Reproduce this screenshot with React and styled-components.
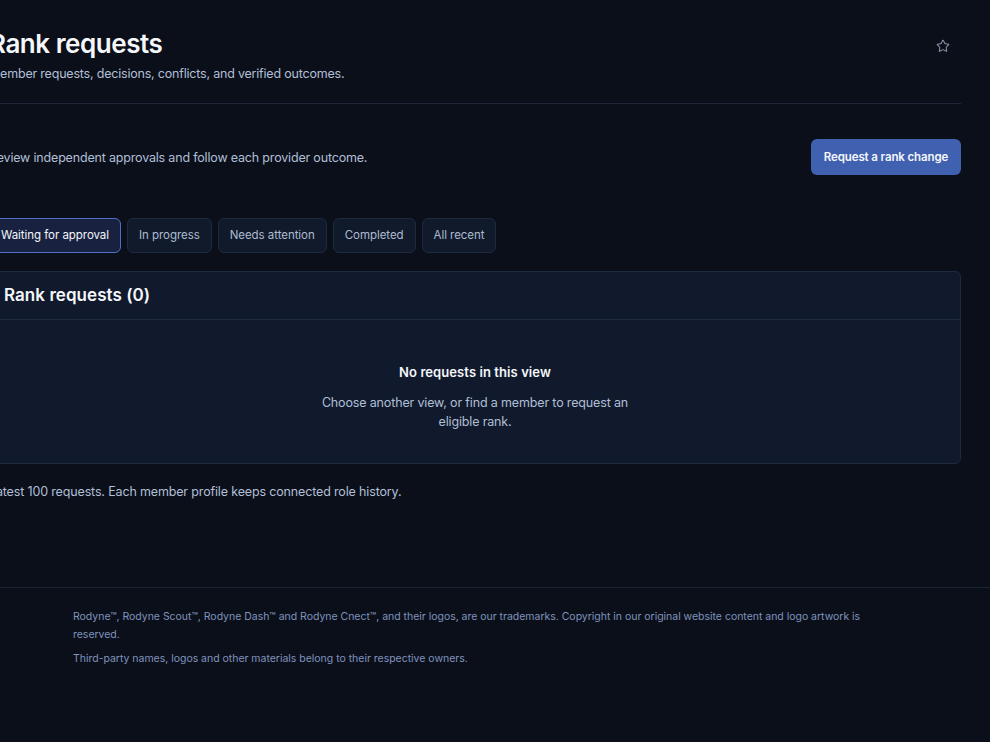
import styled, { createGlobalStyle } from 'styled-components';
import { Star } from 'lucide-react';

const GlobalStyle = createGlobalStyle`
  html, body {
    margin: 0;
    height: 100%;
    overflow: hidden;
    background: #0b0f1a;
  }
  body {
    font-family: "Inter", "Liberation Sans", sans-serif;
    color: #b1bfd6;
  }
`;

/* the page is scrolled sideways in the shot, so its left edge is off screen */
const Page = styled.div`
  width: 1030px;
  margin-left: -40px;
`;

const Main = styled.main`
  height: 587px;
  box-sizing: border-box;
  padding: 27px 29px 0;
`;

const PageHeader = styled.header`
  display: flex;
  justify-content: space-between;
  align-items: flex-start;
  height: 76px;
  border-bottom: 1px solid #1e2638;
`;

const Title = styled.h1`
  margin: 0;
  font-size: 26px;
  line-height: 34px;
  font-weight: 600;
  letter-spacing: -0.45px;
  color: #f5f7fb;
`;

const Subtitle = styled.p`
  margin: 3px 0 0;
  font-size: 12.5px;
  line-height: 20px;
  letter-spacing: -0.2px;
`;

const FavButton = styled.button`
  display: flex;
  margin: 12px 11px 0 0;
  padding: 0;
  border: none;
  background: none;
  color: #8a94a8;
`;

const ActionRow = styled.div`
  display: flex;
  justify-content: space-between;
  align-items: center;
  margin-top: 35px;
`;

const Lead = styled.p`
  margin: 0;
  font-size: 12.5px;
  letter-spacing: -0.18px;
`;

const PrimaryButton = styled.button`
  height: 36px;
  width: 150px;
  border: none;
  border-radius: 6px;
  background: #4060b0;
  color: #f5f7fb;
  font: 600 11.5px "Inter", sans-serif;
  letter-spacing: -0.12px;
`;

const Tabs = styled.div`
  display: flex;
  gap: 6px;
  margin-top: 43px;
`;

const Tab = styled.button`
  height: 35px;
  box-sizing: border-box;
  padding: 0 11px 1px;
  border: 1px solid ${props => (props.$active ? '#4f6fc9' : '#1e2a3e')};
  border-radius: 6px;
  background: ${props => (props.$active ? '#182240' : '#111a2b')};
  color: ${props => (props.$active ? '#f5f7fb' : '#aebbd0')};
  font: 400 11.5px "Inter", sans-serif;
  letter-spacing: -0.05px;
`;

const Panel = styled.section`
  margin-top: 18px;
  height: 193px;
  box-sizing: border-box;
  border: 1px solid #1e2a3e;
  border-radius: 6px;
  background: #101a2c;
`;

const PanelHeader = styled.div`
  height: 48px;
  box-sizing: border-box;
  padding: 0 14px 2px;
  display: flex;
  align-items: center;
  border-bottom: 1px solid #1e2a3e;
`;

const PanelTitle = styled.h2`
  margin: 0;
  font-size: 17px;
  font-weight: 600;
  letter-spacing: 0.05px;
  color: #f5f7fb;
`;

const Empty = styled.div`
  width: 320px;
  margin: 42px auto 0;
  text-align: center;
`;

const EmptyTitle = styled.h3`
  margin: 0;
  font-size: 13px;
  line-height: 20px;
  font-weight: 600;
  letter-spacing: 0.08px;
  color: #f5f7fb;
`;

const EmptyText = styled.p`
  margin: 11px 0 0;
  font-size: 12.5px;
  line-height: 19px;
  letter-spacing: -0.15px;
`;

const Note = styled.p`
  margin: 18px 0 0;
  font-size: 12.5px;
  line-height: 20px;
  letter-spacing: -0.15px;
`;

const Footer = styled.footer`
  height: 155px;
  box-sizing: border-box;
  border-top: 1px solid #1a2233;
  padding: 20px 0 0 113px;
`;

const Legal = styled.p`
  width: 800px;
  margin: 0 0 6px;
  font-size: 10.5px;
  line-height: 18px;
  letter-spacing: -0.02px;
  color: #7f93bd;
`;

export default function App() {
  const tabs = ['Waiting for approval', 'In progress', 'Needs attention', 'Completed', 'All recent'];

  return (
    <Page>
      <GlobalStyle />
      <Main>
        <PageHeader>
          <div>
            <Title>Rank requests</Title>
            <Subtitle>Member requests, decisions, conflicts, and verified outcomes.</Subtitle>
          </div>
          <FavButton aria-label="Add to favourites">
            <Star size={14} strokeWidth={1.75} />
          </FavButton>
        </PageHeader>

        <ActionRow>
          <Lead>Review independent approvals and follow each provider outcome.</Lead>
          <PrimaryButton>Request a rank change</PrimaryButton>
        </ActionRow>

        <Tabs>
          {tabs.map((tab, i) => (
            <Tab key={tab} $active={i === 0}>{tab}</Tab>
          ))}
        </Tabs>

        <Panel>
          <PanelHeader>
            <PanelTitle>Rank requests (0)</PanelTitle>
          </PanelHeader>
          <Empty>
            <EmptyTitle>No requests in this view</EmptyTitle>
            <EmptyText>Choose another view, or find a member to request an eligible rank.</EmptyText>
          </Empty>
        </Panel>

        <Note>Latest 100 requests. Each member profile keeps connected role history.</Note>
      </Main>

      <Footer>
        <Legal>
          Rodyne™, Rodyne Scout™, Rodyne Dash™ and Rodyne Cnect™, and their logos, are our trademarks. Copyright in our original website content and logo artwork is reserved.
        </Legal>
        <Legal>Third-party names, logos and other materials belong to their respective owners.</Legal>
      </Footer>
    </Page>
  );
}
